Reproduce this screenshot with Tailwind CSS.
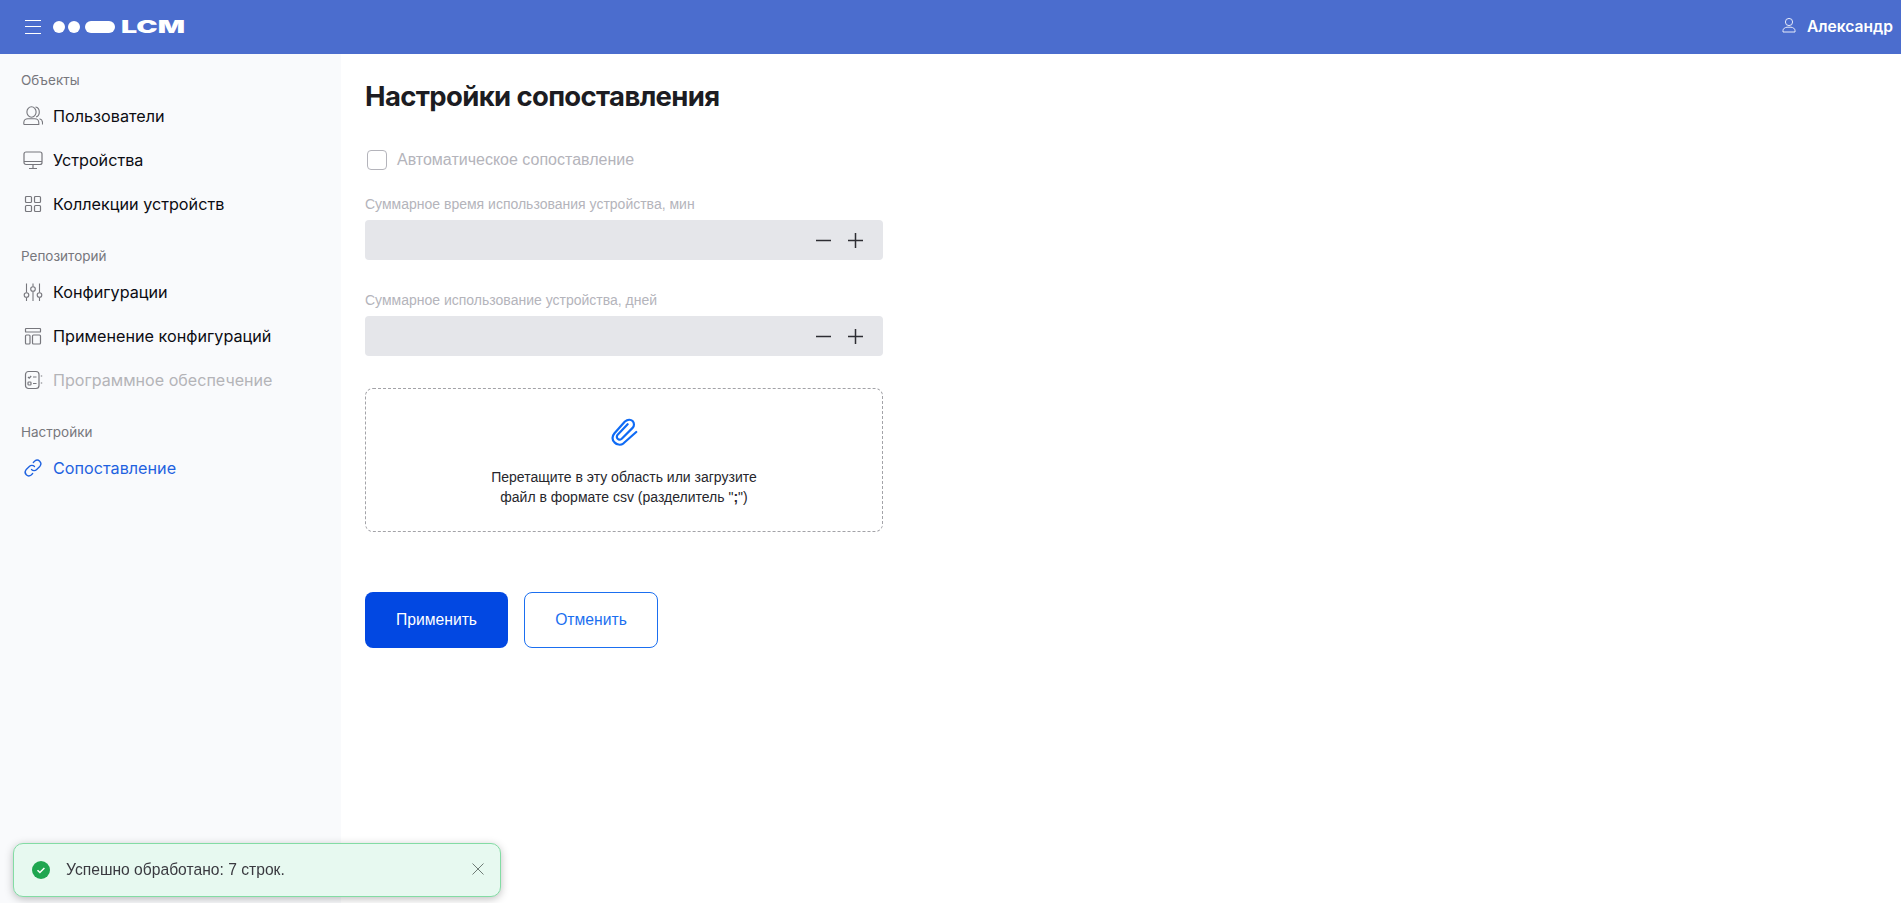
<!DOCTYPE html>
<html lang="ru">
<head>
  <meta charset="UTF-8">
  <title>Настройки сопоставления</title>
  <script src="https://cdn.jsdelivr.net/npm/@tailwindcss/browser@4"></script>
</head>
<body class="h-[903px] overflow-hidden bg-white font-['Inter',sans-serif]">
  <!-- шапка -->
  <header class="h-[54px] bg-[#4b6dce] flex items-center justify-between pl-[25px] pr-[8px] text-white">
    <div class="flex items-center">
      <svg width="16" height="14" viewBox="0 0 16 14" class="mr-[12px]" fill="none" stroke="#ffffff" stroke-width="1"><path d="M0 .5h16M0 6.500h16M0 13.500h16"/></svg>
      <div class="flex items-center">
        <span class="w-[12px] h-[12px] rounded-full bg-white"></span>
        <span class="w-[12px] h-[12px] rounded-full bg-white ml-[3px]"></span>
        <span class="w-[30px] h-[12px] rounded-full bg-white ml-[5px]"></span>
        <span class="ml-[6px] w-[62px] text-[17px] leading-[12px] font-black origin-left scale-x-[1.68] inline-block">LCM</span>
      </div>
    </div>
    <div class="flex items-center">
      <svg width="14" height="16" viewBox="0 0 14 16" fill="none" stroke="#e6ebfa" stroke-width="1" class="mr-[11px] mb-[4px]"><circle cx="7" cy="5" r="3.6"/><path d="M1 15v-1.500C1 11.500 3 10.500 5 10.200h4c2 .3 4 1.300 4 3.300V15z"/></svg>
      <span class="text-[15.6px] font-semibold">Александр</span>
    </div>
  </header>

  <div class="flex h-[849px]">
    <!-- боковое меню -->
    <aside class="w-[341px] shrink-0 bg-[#f9fafc] pt-[16px]">
      <div class="pl-[21px] h-[20px] leading-[20px] text-[13.5px] text-[#77777d]">Объекты</div>
      <nav class="mt-[4px] mb-[20px]">
        <a class="h-[44px] flex items-center pl-[23px] gap-[10px] text-[16.2px] text-[#0c0c12]">
          <svg width="20" height="20" viewBox="0 0 20 20" fill="none" stroke="#77777d" stroke-width="1.100"><ellipse cx="8.500" cy="6" rx="4.600" ry="5.200"/><path d="M12.500 1c2.500.4 3.800 2.500 3.800 5s-1.300 4.400-3.200 5M.8 18.500v-1.800c0-2.500 2-4 4-4h7c2 0 4 1.500 4 4v1.800H.8M16.500 12.800c1.800.4 3 1.800 3 3.700v2"/></svg>
          Пользователи
        </a>
        <a class="h-[44px] flex items-center pl-[23px] gap-[10px] text-[16.2px] text-[#0c0c12]">
          <svg width="20" height="20" viewBox="0 0 20 20" fill="none" stroke="#77777d" stroke-width="1.200"><rect x="1" y="2" width="18" height="12.500" rx="2"/><path d="M1 11.500h18M10 14.500v3.500M6 18.500h8"/></svg>
          Устройства
        </a>
        <a class="h-[44px] flex items-center pl-[23px] gap-[10px] text-[16.2px] text-[#0c0c12]">
          <svg width="20" height="20" viewBox="0 0 20 20" fill="none" stroke="#77777d" stroke-width="1.200"><rect x="2.500" y="2.500" width="6" height="6" rx="1"/><rect x="11.500" y="2.500" width="6" height="6" rx="1"/><rect x="2.500" y="11.500" width="6" height="6" rx="1"/><rect x="11.500" y="11.500" width="6" height="6" rx="1"/></svg>
          Коллекции устройств
        </a>
      </nav>

      <div class="pl-[21px] h-[20px] leading-[20px] text-[13.5px] text-[#77777d]">Репозиторий</div>
      <nav class="mt-[4px] mb-[20px]">
        <a class="h-[44px] flex items-center pl-[23px] gap-[10px] text-[16.2px] text-[#0c0c12]">
          <svg width="20" height="20" viewBox="0 0 20 20" fill="none" stroke="#77777d" stroke-width="1.100"><path d="M3.500 1.500v9M10 1.500v3M16.500 1.500v9M3.500 15.500v3.500M10 9.500v9.500M16.500 15.500v3.500"/><circle cx="3.500" cy="13" r="2.300"/><circle cx="10" cy="7" r="2.300"/><circle cx="16.500" cy="13" r="2.300"/></svg>
          Конфигурации
        </a>
        <a class="h-[44px] flex items-center pl-[23px] gap-[10px] text-[16.2px] text-[#0c0c12]">
          <svg width="20" height="20" viewBox="0 0 20 20" fill="none" stroke="#77777d" stroke-width="1.200"><rect x="2.500" y="2.500" width="15" height="3.500" rx=".6"/><rect x="2.500" y="9" width="4.500" height="9" rx="1"/><rect x="9.500" y="9" width="8" height="9" rx="1"/></svg>
          Применение конфигураций
        </a>
        <a class="h-[44px] flex items-center pl-[23px] gap-[10px] text-[16.1px] text-[#b4b4b8]">
          <svg width="20" height="20" viewBox="0 0 20 20" fill="none" stroke="#77777d" stroke-width="1.200"><rect x="2.500" y="1.500" width="13.500" height="17" rx="3"/><path d="M5 7l1.200 1.200 2-2.200M10 7h3.500M10 13.500h3.500M17.800 6h1.400M17.800 13h1.400"/><rect x="5" y="12" width="3" height="3" rx=".8"/></svg>
          Программное обеспечение
        </a>
      </nav>

      <div class="pl-[21px] h-[20px] leading-[20px] text-[13.5px] text-[#77777d]">Настройки</div>
      <nav class="mt-[4px]">
        <a class="h-[44px] flex items-center pl-[23px] gap-[10px] text-[16.2px] text-[#1f62e0]">
          <svg width="20" height="20" viewBox="0 0 20 20" fill="none" stroke="#1f62e0" stroke-width="1.300" stroke-linecap="round"><path d="M8.500 11.500a3.600 3.600 0 0 0 5.200 0l3.300-3.300a3.700 3.700 0 0 0-5.200-5.200l-1.500 1.500"/><path d="M11.500 8.500a3.600 3.600 0 0 0-5.200 0l-3.300 3.300a3.700 3.700 0 0 0 5.200 5.200l1.500-1.500"/></svg>
          Сопоставление
        </a>
      </nav>
    </aside>

    <!-- форма -->
    <main class="flex-1 pl-[24px] pt-[24px]">
      <h1 class="text-[27.5px] leading-[36px] font-bold text-[#1c1c22] tracking-[-0.65px]">Настройки сопоставления</h1>

      <div class="w-[518px] font-['Liberation_Sans',sans-serif]">
        <label class="flex items-center mt-[36px] h-[20px] pl-[2px] text-[16px] text-[#b4b4bb]">
          <span class="w-[20px] h-[20px] rounded-[4px] border border-[#b4b4bb] bg-white mr-[10px]"></span>
          Автоматическое сопоставление
        </label>

        <div class="mt-[24px] h-[20px] leading-[20px] text-[14px] text-[#b4b4bb]">Суммарное время использования устройства, мин</div>
        <div class="mt-[6px] h-[40px] bg-[#e5e6ea] rounded-[4px] flex items-center justify-end gap-[17px] pr-[20px]">
          <svg width="15" height="15" viewBox="0 0 15 15" stroke="#2d2d33" stroke-width="1.500"><path d="M0 7.500h15"/></svg>
          <svg width="15" height="15" viewBox="0 0 15 15" stroke="#2d2d33" stroke-width="1.500"><path d="M0 7.500h15M7.500 0v15"/></svg>
        </div>

        <div class="mt-[30px] h-[20px] leading-[20px] text-[14px] text-[#b4b4bb]">Суммарное использование устройства, дней</div>
        <div class="mt-[6px] h-[40px] bg-[#e5e6ea] rounded-[4px] flex items-center justify-end gap-[17px] pr-[20px]">
          <svg width="15" height="15" viewBox="0 0 15 15" stroke="#2d2d33" stroke-width="1.500"><path d="M0 7.500h15"/></svg>
          <svg width="15" height="15" viewBox="0 0 15 15" stroke="#2d2d33" stroke-width="1.500"><path d="M0 7.500h15M7.500 0v15"/></svg>
        </div>

        <div class="mt-[32px] h-[144px] rounded-[8px] border border-dashed border-[#a3a3a8] flex flex-col items-center pt-[28px]">
          <svg width="30" height="29" viewBox="0 0 32 32" fill="none" stroke="#0f6bf5" stroke-width="2.400" stroke-linecap="round" stroke-linejoin="round"><path d="M29.500 16.500 15.500 29C12 31.500 8 30.500 5.500 28C2.800 25 3 21 5.500 18L17 5C20 2.500 23.500 2.500 25.500 4.500C27.500 6.500 27.500 10 25.500 12L13.500 24C12 25.200 10 25 9 24C8 23 8 21 9 19.500L20 8"/></svg>
          <div class="mt-[21px] text-[14px] leading-[20px] text-center text-[#26262c]">Перетащите в эту область или загрузите<br>файл в формате csv (разделитель "<b>;</b>")</div>
        </div>

        <div class="mt-[60px] flex gap-[16px]">
          <button class="w-[143px] h-[56px] rounded-[8px] bg-[#0248e2] text-white text-[15.7px]">Применить</button>
          <button class="w-[134px] h-[56px] rounded-[8px] border border-[#1b6ff0] bg-white text-[#1b6ff0] text-[15.7px]">Отменить</button>
        </div>
      </div>
    </main>
  </div>

  <!-- уведомление -->
  <div class="fixed left-[13px] top-[843px] w-[488px] h-[54px] rounded-[10px] border border-[#83dca4] bg-[#e7f9f0] shadow-[0_2px_8px_rgba(0,0,0,0.25)] flex items-center pl-[18px] pr-[16px] font-['Liberation_Sans',sans-serif]">
    <svg width="18" height="18" viewBox="0 0 18 18" class="mr-[16px]"><circle cx="9" cy="9" r="9" fill="#1fa650"/><path d="M5.500 9.200l2.400 2.300 4.500-4.500" fill="none" stroke="#fff" stroke-width="1.500"/></svg>
    <span class="flex-1 text-[15.65px] text-[#3a3a40]">Успешно обработано: 7 строк.</span>
    <svg width="12" height="12" viewBox="0 0 12 12" stroke="#6f7c76" stroke-width="1" class="mb-[2px]"><path d="M.5.500l11 11M11.500.500l-11 11"/></svg>
  </div>
</body>
</html>
